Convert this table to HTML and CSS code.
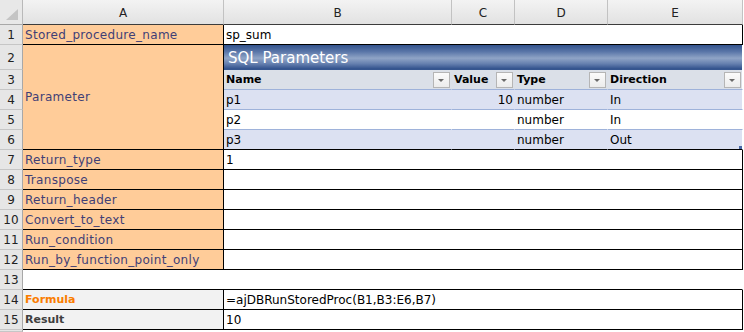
FILE: index.html
```html
<!DOCTYPE html>
<html>
<head>
<meta charset="utf-8">
<link rel="stylesheet" href="styles.css">
</head>
<body>
<div class="sheet">
  <!-- column headers -->
  <div class="corner"><svg width="12" height="11" viewBox="0 0 12 11"><polygon points="12,0 12,11 0,11" fill="#c4c4c4"/></svg></div>
  <div class="colhdr">A</div>
  <div class="colhdr">B</div>
  <div class="colhdr">C</div>
  <div class="colhdr">D</div>
  <div class="colhdr">E</div>

  <!-- row 1 -->
  <div class="rowhdr">1</div>
  <div class="cell input">Stored_procedure_name</div>
  <div class="cell span4 plain">sp_sum</div>

  <!-- row 2 -->
  <div class="rowhdr">2</div>
  <div class="cell input param">Parameter</div>
  <div class="cell span4 title">SQL Parameters</div>

  <!-- row 3 -->
  <div class="rowhdr">3</div>
  <div class="cell th"><span>Name</span><i class="dd"></i></div>
  <div class="cell th"><span>Value</span><i class="dd"></i></div>
  <div class="cell th"><span>Type</span><i class="dd"></i></div>
  <div class="cell th te"><span>Direction</span><i class="dd"></i></div>

  <!-- row 4 -->
  <div class="rowhdr">4</div>
  <div class="cell band">p1</div>
  <div class="cell band num">10</div>
  <div class="cell band">number</div>
  <div class="cell band te">In</div>

  <!-- row 5 -->
  <div class="rowhdr">5</div>
  <div class="cell row">p2</div>
  <div class="cell row num"></div>
  <div class="cell row">number</div>
  <div class="cell row te">In</div>

  <!-- row 6 -->
  <div class="rowhdr">6</div>
  <div class="cell band last">p3</div>
  <div class="cell band last num"></div>
  <div class="cell band last">number</div>
  <div class="cell band last te corner-cell">Out<b class="handle"></b></div>

  <!-- rows 7-12 -->
  <div class="rowhdr">7</div>
  <div class="cell input">Return_type</div>
  <div class="cell span4 plain">1</div>

  <div class="rowhdr">8</div>
  <div class="cell input">Transpose</div>
  <div class="cell span4 plain"></div>

  <div class="rowhdr">9</div>
  <div class="cell input">Return_header</div>
  <div class="cell span4 plain"></div>

  <div class="rowhdr">10</div>
  <div class="cell input">Convert_to_text</div>
  <div class="cell span4 plain"></div>

  <div class="rowhdr">11</div>
  <div class="cell input">Run_condition</div>
  <div class="cell span4 plain"></div>

  <div class="rowhdr">12</div>
  <div class="cell input">Run_by_function_point_only</div>
  <div class="cell span4 plain"></div>

  <!-- row 13 -->
  <div class="rowhdr">13</div>
  <div class="cell span5 empty"></div>

  <!-- row 14 -->
  <div class="rowhdr">14</div>
  <div class="cell calc">Formula</div>
  <div class="cell span4 plain">=ajDBRunStoredProc(B1,B3:E6,B7)</div>

  <!-- row 15 -->
  <div class="rowhdr">15</div>
  <div class="cell output">Result</div>
  <div class="cell span4 plain">10</div>

  <!-- row 16 (partially visible) -->
  <div class="rowhdr"></div>
</div>
</body>
</html>
```

FILE: styles.css
```css
* { box-sizing: border-box; }
html, body { margin: 0; padding: 0; background: #fff; }
body {
  font-family: "DejaVu Sans", Verdana, sans-serif;
  font-size: 12px;
  color: #000;
  width: 744px;
  height: 332px;
  overflow: hidden;
}
.sheet {
  display: grid;
  grid-template-columns: 23px 201px 228px 63px 93px 135px;
  grid-template-rows: 25px 20px 25px repeat(13, 20px);
  width: 743px;
}
.corner {
  background: #e8e8e8;
  border-right: 1px solid #b9b9b9;
  border-bottom: 1px solid #a8a8a8;
  display: flex;
  align-items: flex-end;
  justify-content: flex-end;
  padding: 0 4px 4px 0;
}
.colhdr {
  background: linear-gradient(#f3f3f3, #e2e2e2);
  border-right: 1px solid #c2c2c2;
  border-bottom: 1px solid #3c3c3c;
  display: flex;
  align-items: center;
  justify-content: center;
  color: #222;
  font-size: 12px;
  padding-top: 2px;
}
.rowhdr {
  background: #e6e6e6;
  border-right: 1px solid #a8a8a8;
  border-bottom: 1px solid #c6c6c6;
  display: flex;
  align-items: center;
  justify-content: center;
  color: #222;
  font-size: 12px;
  padding-top: 1px;
}
.cell {
  display: flex;
  align-items: flex-end;
  padding: 0 2px 2px 2px;
  white-space: nowrap;
  overflow: hidden;
  border-right: 1px solid transparent;
  border-bottom: 1px solid transparent;
  line-height: 14px;
}
.span4 { grid-column: span 4; }
.span5 { grid-column: span 5; }
.input {
  background: #ffcc99;
  color: #3f3f76;
  letter-spacing: 0.3px;
  border-right-color: #000;
  border-bottom-color: #000;
}
.param {
  grid-row: span 5;
  align-items: center;
  padding-top: 2px;
}
.plain {
  background: #fff;
  border-right-color: #000;
  border-bottom-color: #000;
}
.title {
  background: linear-gradient(#33538d 0%, #5a76a8 28%, #8fa4c6 55%, #6680af 78%, #31518c 100%);
  color: #fff;
  font-size: 15px;
  padding: 0 3px 2px 4px;
  line-height: 17px;
  border-right-color: #fff;
}
.th {
  background: #dbe0e8;
  font-weight: bold;
  font-size: 11px;
  justify-content: space-between;
  align-items: center;
  padding: 0 1px 0 2px;
  border-bottom-color: #9eb2da;
}
.th span { padding-top: 1px; }
.dd {
  display: block;
  width: 17px;
  height: 16px;
  border: 1px solid #b5b5b5;
  background: linear-gradient(#fbfbfb, #ececec);
  position: relative;
  flex: none;
}
.dd::after {
  content: "";
  position: absolute;
  left: 4px;
  top: 6px;
  border-left: 3.5px solid transparent;
  border-right: 3.5px solid transparent;
  border-top: 3px solid #6a6a6a;
}
.band {
  background: #dce1f2;
  border-bottom-color: #9eb2da;
}
.row {
  background: #fff;
  border-bottom-color: #9eb2da;
}
.band.te, .row.te, .th.te { border-right-color: #fff; }
.last { border-bottom-color: #000; }
.num { justify-content: flex-end; padding-right: 1px; }
.corner-cell { position: relative; }
.handle {
  position: absolute;
  right: 0;
  bottom: 0;
  width: 3px;
  height: 3px;
  background: #4a69a8;
}
.empty {
  background: #fff;
  border-bottom-color: #000;
}
.calc {
  background: #f2f2f2;
  color: #fa7d00;
  font-weight: bold;
  font-size: 11px;
  border-right-color: #000;
  border-bottom-color: #000;
}
.output {
  background: #f2f2f2;
  color: #3f3f3f;
  font-weight: bold;
  font-size: 11px;
  border-right-color: #000;
  border-bottom-color: #000;
}
```
